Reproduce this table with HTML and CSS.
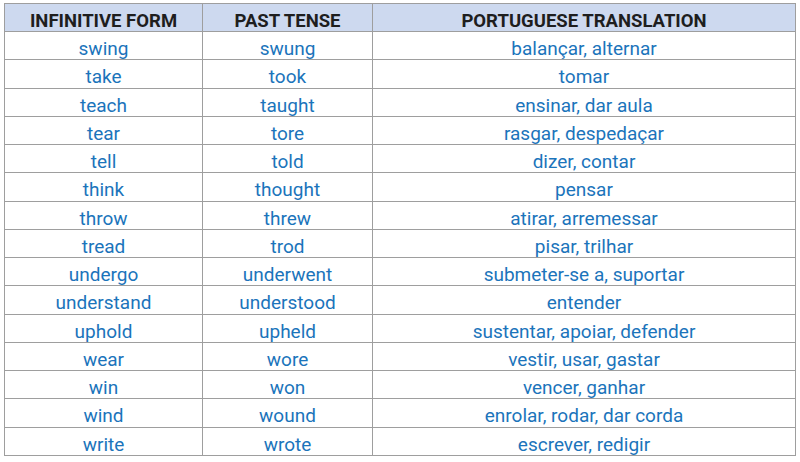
FILE: index.html
```html
<!DOCTYPE html>
<html>
<head>
<meta charset="utf-8">
<link rel="stylesheet" href="styles.css">
</head>
<body>
<table class="verbs">
<colgroup><col class="c1"><col class="c2"><col class="c3"></colgroup>
<thead>
<tr><th>INFINITIVE FORM</th><th>PAST TENSE</th><th>PORTUGUESE TRANSLATION</th></tr>
</thead>
<tbody>
<tr><td>swing</td><td>swung</td><td>balançar, alternar</td></tr>
<tr><td>take</td><td>took</td><td>tomar</td></tr>
<tr><td>teach</td><td>taught</td><td>ensinar, dar aula</td></tr>
<tr><td>tear</td><td>tore</td><td>rasgar, despedaçar</td></tr>
<tr><td>tell</td><td>told</td><td>dizer, contar</td></tr>
<tr><td>think</td><td>thought</td><td>pensar</td></tr>
<tr><td>throw</td><td>threw</td><td>atirar, arremessar</td></tr>
<tr><td>tread</td><td>trod</td><td>pisar, trilhar</td></tr>
<tr><td>undergo</td><td>underwent</td><td>submeter-se a, suportar</td></tr>
<tr><td>understand</td><td>understood</td><td>entender</td></tr>
<tr><td>uphold</td><td>upheld</td><td>sustentar, apoiar, defender</td></tr>
<tr><td>wear</td><td>wore</td><td>vestir, usar, gastar</td></tr>
<tr><td>win</td><td>won</td><td>vencer, ganhar</td></tr>
<tr><td>wind</td><td>wound</td><td>enrolar, rodar, dar corda</td></tr>
<tr><td>write</td><td>wrote</td><td>escrever, redigir</td></tr>
</tbody>
</table>
</body>
</html>
```
FILE: styles.css
```css
html, body {
  margin: 0;
  background: #ffffff;
}
body {
  padding: 3px 0 0 4px;
  font-family: Roboto, "Liberation Sans", sans-serif;
}
.verbs {
  border-collapse: collapse;
  table-layout: fixed;
  width: 791px;
}
.c1 { width: 198px; }
.c2 { width: 170px; }
.c3 { width: 423px; }
.verbs th, .verbs td {
  border: 1px solid #9e9e9e;
  text-align: center;
  vertical-align: top;
  padding: 0;
  white-space: nowrap;
}
.verbs th {
  height: 19px;
  line-height: 19px;
  background: #cdd9ef;
  color: #1e1e1e;
  font-weight: 700;
  font-size: 18.5px;
  padding-top: 8px;
}
.verbs td {
  height: 20.27px;
  line-height: 20px;
  color: #1b74bb;
  font-size: 19px;
  padding-top: 7px;
}
```
